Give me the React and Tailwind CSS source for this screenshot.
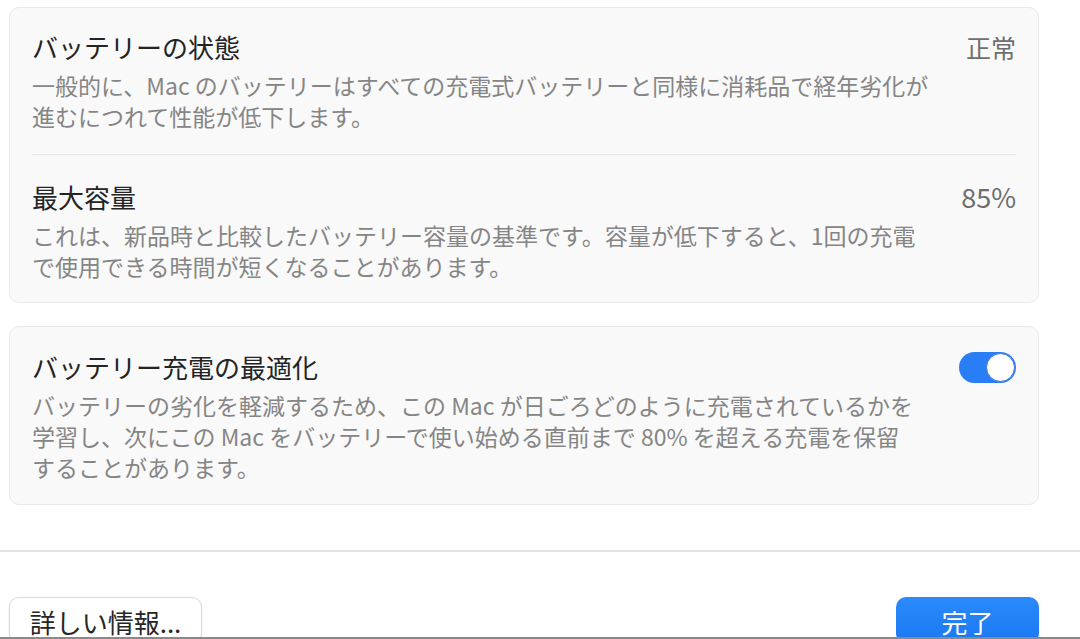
import React from "react";

const font = { fontFamily: '"Noto Sans CJK JP", "Noto Sans", sans-serif' };

function Row({ title, value, children, className = "" }) {
  return (
    <div className={"flex justify-between " + className}>
      <div>
        <div className="text-[26px] leading-[32px] text-[#242424]">{title}</div>
        <div className="mt-[7px] text-[23px] leading-[31px] text-[#858585]">{children}</div>
      </div>
      {value}
    </div>
  );
}

function Toggle() {
  return (
    <div className="mt-[1px] w-[57px] h-[31px] rounded-full bg-[#2a7ef5] flex items-center justify-end pr-[1px] shrink-0">
      <div className="w-[29px] h-[29px] rounded-full bg-white border border-[#3d74d6]" />
    </div>
  );
}

export default function App() {
  return (
    <div
      className="w-[1080px] h-[639px] bg-white overflow-hidden flex flex-col border-b-2 border-[#8a8a8a] box-border"
      style={font}
    >
      <div className="pl-[9px] pr-[41px] pt-[7px]">
        <div className="rounded-[10px] border border-[#e9e9e9] bg-[#f9f9f9] px-[22px]">
          <Row
            title="バッテリーの状態"
            className="pt-[23px] pb-[22px] border-b border-[#e6e6e6]"
            value={<div className="text-[25px] leading-[32px] text-[#6e6e6e]">正常</div>}
          >
            一般的に、Mac のバッテリーはすべての充電式バッテリーと同様に消耗品で経年劣化が
            <br />
            進むにつれて性能が低下します。
          </Row>
          <Row
            title="最大容量"
            className="pt-[26px] pb-[20px]"
            value={<div className="text-[27px] leading-[32px] text-[#6e6e6e]">85%</div>}
          >
            これは、新品時と比較したバッテリー容量の基準です。容量が低下すると、1回の充電
            <br />
            で使用できる時間が短くなることがあります。
          </Row>
        </div>

        <div className="mt-[23px] rounded-[10px] border border-[#e9e9e9] bg-[#f9f9f9] px-[22px]">
          <Row title="バッテリー充電の最適化" className="pt-[24px] pb-[21px]" value={<Toggle />}>
            バッテリーの劣化を軽減するため、この Mac が日ごろどのように充電されているかを
            <br />
            学習し、次にこの Mac をバッテリーで使い始める直前まで 80% を超える充電を保留
            <br />
            することがあります。
          </Row>
        </div>
      </div>

      <div className="mt-[45px] h-[2px] bg-[#e3e3e3] shrink-0" />

      <div className="mt-[45px] pl-[9px] pr-[41px] flex justify-between items-start">
        <div className="w-[193px] h-[46px] rounded-[10px] border border-[#dadada] bg-white shadow-[0_1px_2px_rgba(0,0,0,0.12)] flex items-center justify-center text-[26px] leading-[32px] text-[#262626] pt-[3px]">
          詳しい情報...
        </div>
        <div className="w-[143px] h-[46px] rounded-[10px] bg-gradient-to-b from-[#2b8afb] to-[#1a78f2] flex items-center justify-center text-[26px] leading-[32px] text-white pt-[3px]">
          完了
        </div>
      </div>
    </div>
  );
}
